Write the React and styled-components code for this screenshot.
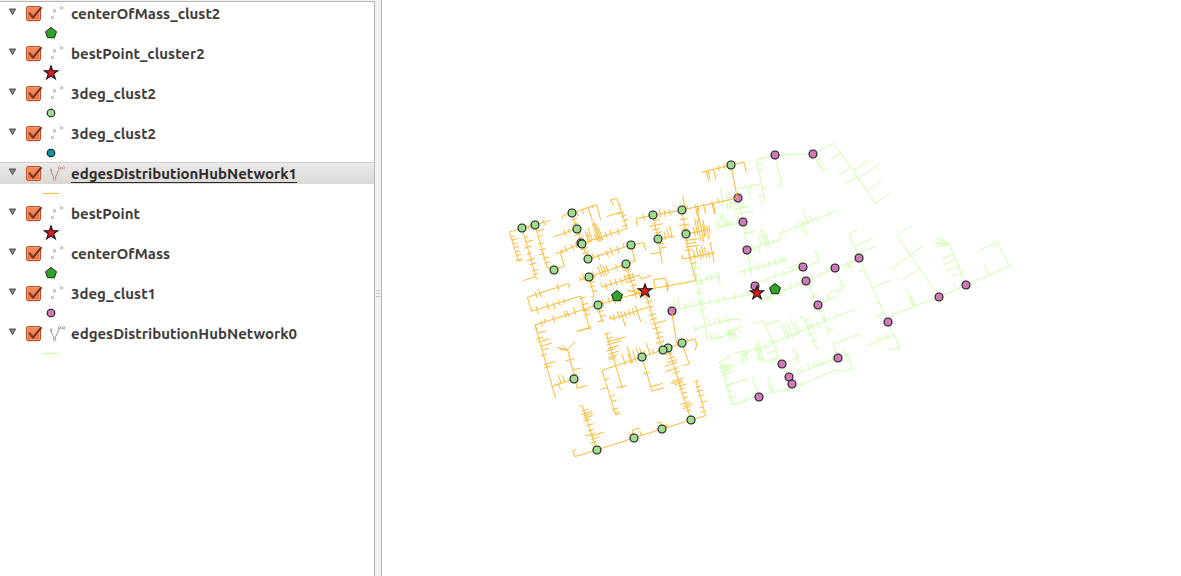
import React, { useState } from "react";
import styled, { createGlobalStyle } from "styled-components";

const GlobalStyle = createGlobalStyle`
  *, *::before, *::after { box-sizing: border-box; }
  body { margin: 0; background: #fff; }
`;

const Shell = styled.div`
  display: flex;
  min-height: 100vh;
  font-family: Ubuntu, "Open Sans", sans-serif;
  color: #3c3c3c;
`;

const Sidebar = styled.aside`
  flex: 0 0 375px;
  display: flex;
  padding-top: 1px;
  background: #f2f1f0;
`;

const LayerTree = styled.ul`
  flex: 1;
  margin: 0;
  padding: 0;
  list-style: none;
  background: #fff;
  border-top: 1px solid #bab7b3;
  border-right: 1px solid #bab7b3;
`;

const LayerRow = styled.div`
  display: flex;
  align-items: center;
  height: 22px;
  padding-left: 8px;
  background: ${(p) => (p.$selected ? "linear-gradient(#ebeae9, #dbd9d6)" : "none")};
  border-top: 1px solid ${(p) => (p.$selected ? "#d2d0cd" : "transparent")};
`;

const Expander = styled.button`
  display: flex;
  width: 18px;
  height: 20px;
  padding: 4px 0 0;
  border: 0;
  background: none;
`;

const CheckWrap = styled.span`
  display: grid;
  align-content: start;
  width: 24px;
  height: 20px;
  padding-top: 1px;
  & > * { grid-area: 1 / 1; }
  & > svg { pointer-events: none; z-index: 1; }
  & > input:not(:checked) + svg { visibility: hidden; }
`;

const Check = styled.input`
  appearance: none;
  width: 15px;
  height: 15px;
  margin: 1px 0 0;
  border: 1px solid #c04f25;
  border-radius: 2px;
  background: linear-gradient(#f58a62, #f0733f);
  box-shadow: inset 0 0 0 1px #f79a76, 0 1px 1px #dddddd;
`;

const LayerLabel = styled.label`
  display: flex;
  align-items: center;
  gap: 6px;
  font-size: 15px;
  line-height: 20px;
  font-weight: 700;
  color: ${(p) => (p.$selected ? "#2b2b2b" : "#3c3c3c")};
`;

const LayerName = styled.span`
  text-decoration: ${(p) => (p.$selected ? "underline 1px" : "none")};
  text-underline-offset: 3px;
  text-decoration-skip-ink: none;
`;

const LegendRow = styled.div`
  display: flex;
  align-items: center;
  height: 18px;
  padding-left: 43px;
`;

const Splitter = styled.div`
  flex: 0 0 7px;
  display: flex;
  flex-direction: column;
  align-items: center;
  justify-content: center;
  gap: 2px;
  padding-top: 10px;
  background: #f2f1f0;
  border-right: 1px solid #bab7b3;
  cursor: col-resize;
`;

const Grip = styled.span`
  width: 4px;
  height: 1px;
  background: #c4c2bf;
`;

const MapPane = styled.main`
  flex: 1;
  min-width: 0;
  background: #fff;
`;

const MapDrawing = styled.svg`
  display: block;
  width: 100%;
  height: auto;
`;

const starPoints = "0,-7 1.7,-2.2 6.8,-2.2 2.7,0.8 4.3,5.8 0,2.8 -4.3,5.8 -2.7,0.8 -6.8,-2.2 -1.7,-2.2";
const pentagonPoints = "0,-5.5 5.5,-1.3 3.4,4.7 -3.4,4.7 -5.5,-1.3";
const colours = { green: "#a0dc90", pink: "#cf79b7", teal: "#0d92a4" };

function Marker({ kind, x = 0, y = 0, r = 4 }) {
  const at = `translate(${x} ${y})`;
  if (kind === "star")
    return <polygon transform={at} points={starPoints} fill="#e31a1c" stroke="#151515" strokeWidth="1.1" />;
  if (kind === "pentagon")
    return <polygon transform={at} points={pentagonPoints} fill="#33a02c" stroke="#102a10" strokeWidth="1" />;
  return <circle transform={at} r={r} fill={colours[kind]} stroke="#151515" strokeWidth="1.1" />;
}

function Swatch({ kind }) {
  const line = { orange: "#f8bd45", lime: "#c9ffa4" }[kind];
  return (
    <svg width="16" height="18" viewBox="-8 -9 16 18" aria-hidden="true">
      {line ? <path d="M-8 .5H8" stroke={line} strokeWidth="1" /> : <Marker kind={kind} r={3.8} />}
    </svg>
  );
}

function PointIcon() {
  return (
    <svg width="15" height="20" viewBox="0 0 15 20" fill="#fff" stroke="#989898" strokeWidth=".9" aria-hidden="true">
      <circle cx="2.5" cy="13.5" r="1.2" />
      <circle cx="4.5" cy="6.8" r="1.2" />
      <circle cx="11.5" cy="3.8" r="1.2" />
    </svg>
  );
}

function LineIcon({ active }) {
  return (
    <svg width="15" height="20" viewBox="0 0 15 20" fill="#fff" stroke={active ? "#b3887a" : "#8e8e8e"} strokeWidth=".9" aria-hidden="true">
      <path d="M.8 6 4.5 15.5 9.5 4 13.5 4" fill="none" />
      <circle cx=".9" cy="6" r="1" />
      <circle cx="4.5" cy="15.5" r="1.2" />
      <circle cx="9.5" cy="3.8" r="1.1" />
      <circle cx="13.6" cy="3.8" r="1.1" />
    </svg>
  );
}

const layers = [
  { name: "centerOfMass_clust2", symbol: "pentagon" },
  { name: "bestPoint_cluster2", symbol: "star" },
  { name: "3deg_clust2", symbol: "green" },
  { name: "3deg_clust2", symbol: "teal" },
  { name: "edgesDistributionHubNetwork1", symbol: "orange", line: true, selected: true },
  { name: "bestPoint", symbol: "star" },
  { name: "centerOfMass", symbol: "pentagon" },
  { name: "3deg_clust1", symbol: "pink" },
  { name: "edgesDistributionHubNetwork0", symbol: "lime", line: true },
];

function Layer({ layer, id }) {
  const [open, setOpen] = useState(true);
  return (
    <li>
      <LayerRow $selected={layer.selected}>
        <Expander type="button" aria-label={`Toggle ${layer.name}`} aria-expanded={open} onClick={() => setOpen(!open)}>
          <svg width="9" height="8" viewBox="0 0 9 8">
            <path d="M1.3 1h6.4L4.5 6.6z" fill="#8a8a88" stroke="#51514f" />
          </svg>
        </Expander>
        <CheckWrap>
          <Check type="checkbox" id={id} defaultChecked />
          <svg width="18" height="18" viewBox="0 0 18 18" aria-hidden="true">
            <path d="M3 7.6 7 12.6 15.5 2.2" fill="none" stroke="#6f3a26" strokeWidth="2.2" />
          </svg>
        </CheckWrap>
        <LayerLabel htmlFor={id} $selected={layer.selected}>
          {layer.line ? <LineIcon active={layer.selected} /> : <PointIcon />}
          <LayerName $selected={layer.selected}>{layer.name}</LayerName>
        </LayerLabel>
      </LayerRow>
      {open && <LegendRow><Swatch kind={layer.symbol} /></LegendRow>}
    </li>
  );
}

/* A street is [points, side roads]. Each side road is three numbers:
   distance along the street, then its two extents across it. */
function streetPath([pts, ticks = []]) {
  let d = "M" + pts.join(" ");
  for (let i = 0; i < ticks.length; i += 3) {
    let dist = ticks[i];
    for (let k = 0; k + 3 < pts.length; k += 2) {
      const dx = pts[k + 2] - pts[k];
      const dy = pts[k + 3] - pts[k + 1];
      const len = Math.hypot(dx, dy);
      if (dist <= len || k + 5 >= pts.length) {
        const ux = dx / len;
        const uy = dy / len;
        const x = pts[k] + ux * dist;
        const y = pts[k + 1] + uy * dist;
        const [a, b] = [ticks[i + 1], ticks[i + 2]];
        d += `M${(x - uy * a).toFixed(1)} ${(y + ux * a).toFixed(1)}L${(x - uy * b).toFixed(1)} ${(y + ux * b).toFixed(1)}`;
        break;
      }
      dist -= len;
    }
  }
  return d;
}

const districts = [
  { x: 690, y: 135, colour: "lime", streets: [
    [[199, 74, 255, 60, 369, 57, 432, 25, 556, 205, 602, 174]],
    [[422, 74, 450, 56]], [[445, 121, 481, 97]], [[490, 106, 537, 77]], [[463, 147, 502, 124]],
    [[502, 131, 568, 87]], [[530, 167, 577, 136]],
    [[369, 57, 395, 108, 414, 99], [20, -16, 0, 32, -18, 0, 44, -14, 0]],
    [[255, 60, 276, 152, 263, 154]],
    [[199, 74, 224, 195, 210, 205], [14, -18, 0, 32, -14, 0, 86, -14, 4, 110, 0, 20]],
    [[137, 163, 213, 146], [38, 0, 36, 46, 0, 12]],
    [[92, 158, 101, 222]], [[110, 178, 114, 224]], [[118, 180, 122, 220]], [[75, 203, 110, 197]],
    [[145, 190, 159, 261, 171, 345, 185, 420], [106, -34, 0, 85, -16, 0, 192, -14, 0]],
    [[75, 250, 80, 278, 159, 262], [38, -22, 0, 46, -36, 0, 53, -38, 0, 60, -34, 0, 66, -20, 0, 80, -12, 0, 94, -20, 0]],
    [[128, 225, 182, 212]], [[133, 236, 190, 229]], [[120, 203, 160, 207]],
    [[171, 345, 275, 312, 270, 296, 447, 224], [22, -12, 10, 35, -6, 22, 45, -28, 0, 57, -48, 10, 63, -46, 12, 69, -30, 14, 82, -8, 8, 98, -8, 8, 138, -8, 6, 180, -10, 8, 192, -10, 34, 201, -10, 36, 206, -8, 8, 216, -42, 8, 228, -14, 0, 242, -6, 10, 285, -8, 12]],
    [[145, 412, 290, 375], [16, 0, 14, 38, -8, 10, 62, -12, 12, 80, -12, 8, 95, -12, 10, 116, -12, 8, 132, -18, 6]],
    [[272, 377, 290, 366]], [[275, 375, 294, 384]],
    [[478, 388, 484, 402]],
  ] },
  { x: 690, y: 260, colour: "lime", streets: [
    [[-70, 152, 0, 140, 195, 100], [12, -26, 8, 26, -30, 5, 40, -32, 4, 56, -12, 6, 75, -14, 0, 100, -12, 0, 132, -14, 0, 158, -14, 8, 178, -10, 0, 208, -16, 0, 232, -10, 8, 248, -14, 0]],
    [[8, -30, 20, 60, 53, 240, 132, 221], [55, -12, 16, 76, -12, 16, 102, -16, 8, 130, -12, 12, 157, -10, 8, 180, -14, 8, 205, -14, 0, 287, -14, 0, 296, -10, 0, 307, -16, 0, 340, -12, 0]],
    [[19, 66, 90, 48], [14, -16, 16, 32, -12, 8, 46, -14, 8, 66, -16, 10]],
    [[88, 37, 90, 78]],
    [[15, 208, 122, 178, 152, 180], [0, -14, 10, 22, -12, 0, 48, -18, 0, 65, -14, 0, 77, -18, 6, 92, -12, 8, 104, -12, 8]],
    [[110, 210, 130, 225]], [[115, 222, 120, 238]], [[121, 216, 127, 240]], [[128, 216, 134, 238]], [[135, 214, 140, 236]], [[113, 215, 158, 200]], [[140, 208, 158, 220]], [[108, 222, 140, 206]],
    [[195, 70, 388, 5, 376, -30], [38, 0, 14, 66, -10, 0, 92, -12, 6, 120, -14, 0, 138, -8, 10]],
    [[290, 27, 330, 10, 331, -5]],
    [[215, 122, 348, 63, 435, 24, 507, -3], [18, -8, 12, 28, -6, 12, 38, -14, 0, 58, -12, 12, 76, -14, 0, 96, -14, 6, 118, -12, 8, 168, -12, 12, 194, -8, 10, 214, -12, 0, 272, 0, 16, 282, 0, 18]],
    [[348, 63, 384, 135, 418, 215, 410, 228], [20, -12, 0, 48, -14, 8, 100, -12, 8, 125, -8, 8]],
    [[384, 135, 436, 112, 460, 82, 435, 24], [38, -16, 0, 102, 0, 12]],
    [[410, 118, 421, 95, 447, 90]], [[448, 73, 460, 82]],
    [[408, 210, 432, 208]],
    [[245, 250, 408, 183, 490, 148, 494, 158], [48, -46, 12, 56, -40, 12, 66, -40, 14, 80, -46, 10, 88, -34, 8, 118, -12, 6, 134, -10, 8, 150, -12, 12, 176, -12, 0, 210, -14, 0]],
    [[245, 257, 172, 273, 134, 278], [35, -46, 24, 42, -44, 24, 47, -38, 12, 20, 0, 12]],
    [[188, 191, 220, 183, 276, 312], [98, -10, 16, 128, 0, 30, 148, 0, 46, 154, 0, 36]],
    [[222, 195, 270, 181]],
    [[276, 312, 325, 292, 309, 263]], [[318, 276, 324, 308]],
    [[276, 312, 297, 351, 306, 372]],
    [[328, 175, 338, 167, 382, 272], [30, -14, 0, 50, -14, 4, 72, -16, 8, 94, -16, 8]],
    [[125, 287, 88, 305, 130, 436, 207, 409, 306, 384, 437, 330, 460, 334, 488, 325, 475, 290], [58, -32, 6, 65, -44, 0, 72, -26, 8, 82, -34, 4, 96, -14, 0, 118, -10, 8, 135, -14, 8, 154, -14, 10, 176, -10, 0, 203, -12, 0, 220, -12, 0, 245, -14, 0, 394, -10, 6]],
    [[110, 375, 172, 357]], [[95, 306, 112, 330]], [[97, 325, 115, 312]], [[100, 342, 125, 320]],
    [[297, 351, 444, 294, 478, 280], [15, -14, 0, 30, -16, 0, 44, -18, 0, 66, -18, 0, 84, -12, 0, 96, -18, 0, 108, -14, 0, 124, -12, 0, 142, -12, 0, 184, -18, 10]],
    [[444, 294, 430, 252, 508, 222, 512, 232]],
    [[207, 410, 187, 352], [20, 0, 10]], [[233, 348, 251, 400]], [[235, 378, 246, 398]],
    [[172, 273, 153, 316]], [[170, 275, 150, 302]], [[172, 273, 170, 310]], [[166, 276, 150, 290]],
  ] },
  { x: 840, y: 210, colour: "lime", streets: [
    [[53, 60, 27, 70, 57, 144, 98, 234, 144, 336, 162, 375, 180, 415, 144, 419]],
    [[42, 108, 96, 86]], [[52, 131, 105, 110]], [[98, 234, 158, 208]], [[57, 186, 72, 180]], [[105, 283, 118, 278]], [[107, 320, 130, 310]],
    [[144, 336, 160, 313, 297, 261, 378, 225, 508, 168, 471, 95, 415, 123]],
    [[460, 111, 475, 104]], [[432, 159, 447, 194]],
    [[215, 48, 171, 77, 297, 261]], [[153, 178, 250, 107]], [[183, 212, 238, 176]],
    [[199, 237, 222, 290]], [[208, 258, 218, 288]], [[213, 255, 224, 288]],
    [[378, 225, 328, 104], [40, -32, 6, 62, -40, 6, 82, -40, 6, 100, -38, 6]],
    [[328, 104, 278, 95]], [[328, 104, 287, 109]], [[328, 104, 290, 99]], [[328, 104, 291, 85]], [[328, 104, 302, 83]],
    [[340, 217, 350, 238]],
    [[88, 412, 85, 405, 162, 375], [30, 0, 10, 42, -14, 0, 60, -12, 0, 68, -12, 0, 78, -10, 0]],
  ] },
  { x: 500, y: 190, colour: "orange", streets: [
    [[66, 114, 28, 126, 55, 213, 68, 209], [56, -12, 0, 66, 0, -18, 78, -14, 0, 90, -14, 0, 102, -12, 0, 114, 0, -14, 128, -12, 8]],
    [[66, 114, 105, 105, 150, 91], [20, 0, 12, 68, -8, 10]],
    [[66, 114, 110, 268], [30, -12, 0, 44, -22, 0, 60, -14, 10, 80, -8, 8, 98, -12, 14, 112, -12, 8, 132, -12, 6, 144, -8, 8]],
    [[70, 272, 107, 260]],
    [[105, 105, 142, 235, 157, 231], [20, -22, 0, 36, -14, 0, 58, -12, 6, 76, -12, 8, 90, -4, 12, 104, -14, 6, 118, -14, 4]],
    [[190, 87, 187, 78, 215, 69, 290, 44, 302, 90], [55, 0, 16, 72, 0, 14, 91, 0, 42, 104, -4, 8]],
    [[162, 140, 225, 118], [35, -10, 10, 48, -8, 6]],
    [[215, 69, 231, 117, 246, 160, 264, 207], [20, -12, 8, 34, -10, 10, 66, -8, 14, 80, -10, 6, 114, -12, 10, 126, -10, 12]],
    [[166, 237, 193, 229, 181, 186]], [[166, 192, 246, 160], [22, -6, 8, 34, -12, 8, 56, -10, 10, 68, -10, 8]],
    [[246, 160, 382, 115, 350, 25, 330, 31], [20, -32, 8, 25, -26, 6, 32, -40, 0, 44, -14, 6, 48, -48, 12, 53, -52, 12, 57, -46, 14, 62, -30, 10, 76, -12, 8, 92, -14, 10, 114, -10, 12, 153, -12, 0, 168, -8, 12, 182, -6, 10, 194, -14, 6, 216, 0, 10]],
    [[320, 80, 362, 66]], [[332, 31, 340, 47]],
    [[255, 211, 393, 165, 432, 158, 437, 183], [26, -14, 0, 42, -8, 14, 70, -8, 14, 84, -14, 12, 104, -10, 12, 124, -14, 0]],
    [[393, 165, 405, 213, 378, 222]],
    [[238, 270, 267, 261, 378, 222], [4, -10, 5, 14, -16, 6, 26, -10, 8, 46, -12, 10, 66, -22, 12, 74, -28, 14, 82, -18, 14, 90, -16, 8, 118, -10, 8, 134, 0, 14]],
    [[267, 261, 283, 320, 274, 322], [18, -14, 0, 30, -12, 6, 46, -12, 0]],
    [[302, 280, 306, 291, 418, 255, 424, 268, 455, 256], [24, -10, 14, 40, -14, 8, 56, -12, 10, 72, -8, 12, 86, -14, 8, 98, -12, 8, 110, -10, 10]],
    [[378, 222, 410, 324], [18, -12, 14, 36, -14, 12, 54, -12, 18, 68, -12, 8, 84, -14, 12, 96, -8, 12]],
    [[209, 296, 205, 281, 82, 322, 95, 364, 242, 318, 270, 420], [48, -10, 10, 105, -14, 12, 118, -12, 8, 206, -10, 14, 240, -12, 10, 258, -6, 14, 276, -10, 10, 292, -8, 8, 350, -12, 6, 370, -16, 4, 390, -16, 4, 402, -14, 8]],
    [[110, 420, 105, 405, 293, 345, 405, 312], [36, -6, 12, 48, -10, 6, 75, -10, 12, 112, -14, 6, 120, -12, 8, 142, -16, 10, 168, -10, 8, 230, -12, 12, 250, -14, 6, 266, -10, 14, 282, -12, 10]],
    [[293, 345, 307, 399], [20, -12, 8, 36, -16, 0, 48, -8, 14]],
    [[232, 424, 272, 412]],
    [[330, 376, 332, 388, 435, 355], [24, -10, 8, 38, -16, 6, 48, -14, 36, 58, -10, 10, 72, -12, 8, 84, -12, 10, 96, -18, 34]],
    [[405, 312, 435, 303], [12, -10, 10]],
  ] },
  { x: 600, y: 150, colour: "orange", streets: [
    [[112, 229, 108, 207, 158, 195, 246, 180, 413, 144], [46, -10, 10, 96, -14, 10, 110, -10, 12, 126, -8, 10, 180, -10, 0, 205, -8, 30, 212, -6, 18, 230, -6, 26, 256, -6, 32, 275, -12, 0]],
    [[305, 67, 393, 45, 432, 36, 439, 68], [14, 0, 30, 20, 0, 26, 36, 0, 34, 52, -8, 8, 70, -8, 8]],
    [[393, 45, 412, 144]],
    [[248, 138, 256, 176]], [[292, 170, 297, 220]], [[340, 162, 346, 192]],
    [[158, 195, 174, 267, 187, 340], [18, -18, 0, 32, -24, 16, 44, -12, 12, 55, -16, 6, 90, -16, 0, 102, -20, 0]],
    [[152, 312, 183, 306]], [[174, 267, 224, 258], [22, -16, 8, 32, -28, 0, 42, -34, 6]],
    [[246, 180, 258, 252, 268, 320, 288, 392], [28, -12, 12, 45, -14, 16, 58, -10, 12, 92, -36, 6, 102, -26, 8, 112, -34, 8, 122, -12, 12, 164, -16, 0]],
    [[258, 252, 330, 238], [26, -18, 12, 34, -40, 10, 40, -34, 30, 48, -40, 34, 54, -18, 20, 58, -32, 18, 65, -12, 30, 72, -10, 12]],
    [[246, 314, 248, 327, 345, 308], [36, -12, 6, 50, -20, 8, 60, -28, 6, 68, -20, 12, 76, -30, 8, 84, -22, 12, 93, -10, 12, 104, -34, 28]],
    [[288, 392, 135, 420], [86, -10, 12]],
    [[165, 415, 161, 389, 197, 384, 203, 425]],
    [[80, 420, 150, 440]],
  ] },
  { x: 520, y: 310, colour: "orange", streets: [
    [[45, 45, 107, 265], [26, -28, 0, 42, -14, 8, 52, -30, 6, 66, -34, 0, 78, -20, 0, 94, -10, 8, 122, -30, 6, 132, -14, 8]],
    [[110, 112, 143, 120, 165, 94]], [[126, 106, 143, 122]], [[118, 119, 143, 120]],
    [[143, 120, 172, 235, 203, 226], [30, -14, 14, 62, -26, 0, 76, -10, 8]],
    [[95, 230, 162, 207], [14, -6, 0, 22, -8, 18, 30, -26, 0, 42, -22, 0]],
    [[172, 64, 212, 53]],
    [[258, 68, 307, 235], [4, -12, 6, 18, -16, 4, 28, -52, 6, 36, -36, 8, 48, -28, 10, 54, -14, 14, 64, -20, 12, 74, -14, 16, 80, -8, 14]],
    [[290, 234, 320, 226]],
    [[246, 181, 366, 141, 428, 120, 486, 99, 525, 86, 530, 102, 526, 122], [72, -28, 8, 90, -24, 10, 94, -46, 8, 106, -26, 8, 118, -32, 0, 128, -28, 0, 138, -16, 0, 152, -36, 0, 164, -12, 0, 272, -8, 0]],
    [[246, 181, 287, 315, 301, 309], [30, -14, 0, 54, 0, 22, 82, -16, 0, 98, -16, 0, 122, -14, 6, 134, -12, 0]],
    [[366, 141, 396, 243, 431, 234], [50, -8, 12]], [[393, 231, 428, 220]],
    [[375, -57, 428, 120], [18, -8, 12, 34, -12, 8, 50, -10, 14, 74, -12, 10, 88, -12, 12, 102, -34, 10, 116, -10, 12, 132, -14, 8, 146, -12, 10, 160, -12, 14]],
    [[486, 99, 508, 162, 490, 167]],
    [[455, 3, 470, 100]],
    [[445, 115, 513, 330], [16, -8, 14, 30, -12, 10, 40, -14, 16, 48, -14, 26, 64, -10, 30, 76, -12, 10, 98, -18, 20, 104, -12, 26, 110, -14, 14, 118, -20, 8, 128, -10, 6, 142, -14, 4, 156, -12, 4, 172, -14, 16, 180, -20, 10, 186, -12, 14, 196, -10, 6]],
    [[523, 215, 537, 210]],
    [[528, 213, 557, 317, 513, 330, 425, 357, 341, 384, 230, 420, 165, 440, 158, 423, 168, 419], [18, -10, 6, 32, -12, 6, 46, -14, 4, 66, -16, 0, 80, 0, 12, 94, 0, 12, 228, 0, 12, 310, 0, 14, 340, 0, 18]],
    [[341, 384, 337, 360, 358, 354]], [[425, 357, 421, 336, 411, 338]],
    [[178, 290, 187, 286, 230, 420], [26, -12, 8, 36, -22, 10, 42, -24, 6, 48, -20, 8, 56, -10, 12, 72, -14, 8, 88, -12, 8, 100, -10, 20, 106, -36, 8, 116, -20, 6, 126, -8, 12]],
  ] },
];

const hubs = [
  ["green", 522, 228], ["green", 535, 225], ["green", 572, 213], ["green", 577, 229], ["green", 581, 243], ["green", 582, 244],
  ["green", 588, 259], ["green", 554, 270], ["green", 589, 277], ["green", 598, 305], ["green", 631, 245], ["green", 626, 264],
  ["green", 653, 215], ["green", 682, 210], ["green", 658, 239], ["green", 686, 234], ["green", 731, 165],
  ["green", 574, 379], ["green", 642, 357], ["green", 668, 348], ["green", 663, 350], ["green", 682, 343],
  ["green", 691, 420], ["green", 662, 429], ["green", 634, 438], ["green", 597, 450],
  ["pink", 743, 222], ["pink", 747, 250], ["pink", 775, 155], ["pink", 813, 154],
  ["pink", 755, 286], ["pink", 803, 267], ["pink", 835, 268], ["pink", 859, 258], ["pink", 806, 281], ["pink", 818, 305],
  ["pink", 888, 322], ["pink", 939, 297], ["pink", 966, 285], ["pink", 838, 358], ["pink", 782, 364], ["pink", 789, 377],
  ["pink", 792, 384], ["pink", 759, 397],
  ["pentagon", 617, 296], ["pentagon", 775, 289], ["star", 645, 291], ["star", 757, 293],
];

const streetColours = { lime: "#cdffab", orange: "#fcb932" };

function District({ district }) {
  return (
    <g transform={`translate(${district.x} ${district.y}) scale(.3333)`} stroke={streetColours[district.colour]} strokeWidth="3">
      <path d={district.streets.map(streetPath).join("")} />
    </g>
  );
}

function NetworkMap() {
  return (
    <MapDrawing viewBox="382 0 799 576" preserveAspectRatio="xMinYMin meet" role="img" aria-label="Distribution network map" fill="none">
      {districts.filter((d) => d.colour === "lime").map((d, i) => <District key={i} district={d} />)}
      <Marker kind="pink" x={738} y={198} />
      <Marker kind="pink" x={672} y={311} />
      {districts.filter((d) => d.colour === "orange").map((d, i) => <District key={i} district={d} />)}
      {hubs.map(([kind, x, y], i) => <Marker key={i} kind={kind} x={x} y={y} />)}
    </MapDrawing>
  );
}

export default function App() {
  return (
    <Shell>
      <GlobalStyle />
      <Sidebar>
        <LayerTree aria-label="Layers">
          {layers.map((layer, i) => <Layer key={i} layer={layer} id={`layer-${i}`} />)}
        </LayerTree>
      </Sidebar>
      <Splitter role="separator" aria-orientation="vertical">
        <Grip /><Grip /><Grip />
      </Splitter>
      <MapPane><NetworkMap /></MapPane>
    </Shell>
  );
}
